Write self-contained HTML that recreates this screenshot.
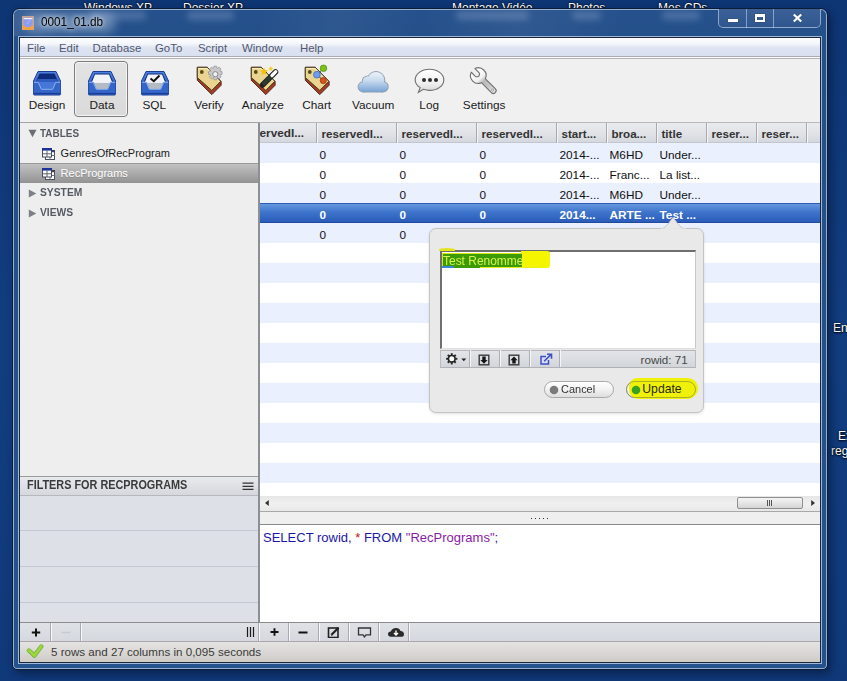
<!DOCTYPE html>
<html><head><meta charset="utf-8">
<style>
*{margin:0;padding:0;box-sizing:border-box}
html,body{width:847px;height:681px;overflow:hidden}
body{position:relative;background:#133c7c;font-family:"Liberation Sans",sans-serif;font-size:12px;color:#000}
.a{position:absolute;display:block}
.t{position:absolute;white-space:nowrap}
.dt{position:absolute;color:#fff;font-size:12px;line-height:14px;text-shadow:0 1px 2px #000,0 0 2px #000;white-space:nowrap}
</style></head><body>

<div class="a" style="left:0px;top:0px;width:847px;height:681px;background:linear-gradient(180deg,#0e3574 0%,#123d7f 50%,#10397a 100%)"></div>
<div class="dt" style="left:84px;top:1px">Windows XP</div>
<div class="dt" style="left:183px;top:1px">Dossier XP</div>
<div class="dt" style="left:452px;top:1px">Montage Vidéo</div>
<div class="dt" style="left:568px;top:1px">Photos</div>
<div class="dt" style="left:658px;top:1px">Mes CDs</div>
<div class="dt" style="left:833px;top:321px">Ent</div>
<div class="dt" style="left:838px;top:429px">Ex</div>
<div class="dt" style="left:831px;top:443.5px">reg</div>
<div class="a" style="left:12px;top:8px;width:816px;height:662px;border-radius:7px 7px 5px 5px;background:linear-gradient(180deg,#26518c 0px,#24508a 28px,#25518c 100%);border:1px solid #0e1c33;box-shadow:inset 0 0 0 1px #93b1d6,3px 4px 8px rgba(0,10,30,.45)"></div>
<div class="a" style="left:88px;top:11px;width:58px;height:9px;background:rgba(210,225,250,.22);filter:blur(3px);border-radius:4px"></div>
<div class="a" style="left:187px;top:11px;width:47px;height:9px;background:rgba(210,225,250,.22);filter:blur(3px);border-radius:4px"></div>
<div class="a" style="left:456px;top:11px;width:73px;height:9px;background:rgba(210,225,250,.22);filter:blur(3px);border-radius:4px"></div>
<div class="a" style="left:572px;top:11px;width:29px;height:9px;background:rgba(210,225,250,.22);filter:blur(3px);border-radius:4px"></div>
<div class="a" style="left:662px;top:11px;width:38px;height:9px;background:rgba(210,225,250,.22);filter:blur(3px);border-radius:4px"></div>
<div class="a" style="left:14px;top:10px;width:812px;height:26px;border-radius:6px 6px 0 0;background:linear-gradient(100deg,rgba(255,255,255,.10) 0%,rgba(255,255,255,0) 6%,rgba(255,255,255,0) 30%,rgba(255,255,255,.04) 40%,rgba(255,255,255,0) 50%,rgba(255,255,255,.05) 62%,rgba(255,255,255,0) 75%)"></div>
<div class="a" style="left:18px;top:36px;width:804px;height:628px;border:1px solid #9cb8de"></div>
<div class="a" style="left:24px;top:13px;width:92px;height:20px;background:rgba(230,240,255,.32);border-radius:10px;filter:blur(5px)"></div>
<svg class="a" style="left:21px;top:15px;" width="14" height="16" viewBox="0 0 14 16"><rect x="1" y="1" width="12" height="14" fill="#c9a58a"/><rect x="2.5" y="2.5" width="9" height="9.5" fill="#8d9cf2"/><rect x="2.5" y="3" width="9" height="1.2" fill="#f0f2ff"/><path d="M1 10.5h2.6l1.2 1.8h4.4l1.2-1.8H13V15H1z" fill="#eea24a"/><path d="M6 9l3-4" stroke="#b0b8ff" stroke-width="1"/></svg>
<div class="t" style="left:41px;top:15.48px;font-size:12.5px;line-height:14.37px;color:#000;transform:scaleX(.94);transform-origin:0 0;text-shadow:0 0 8px rgba(255,255,255,.9),0 0 4px rgba(255,255,255,.7)">0001_01.db</div>
<div class="a" style="left:718px;top:9px;width:103px;height:19px;border:1px solid rgba(200,218,244,.6);border-top:none;border-radius:0 0 5px 5px;background:linear-gradient(180deg,#3c6198,#2f568e)"></div>
<div class="a" style="left:746px;top:9px;width:1px;height:19px;background:rgba(215,228,248,.5)"></div>
<div class="a" style="left:773px;top:9px;width:1px;height:19px;background:rgba(215,228,248,.5)"></div>
<div class="a" style="left:728px;top:19px;width:10px;height:3px;background:#fff;box-shadow:0 0 1px #223"></div>
<div class="a" style="left:755px;top:14px;width:10px;height:8px;border:2px solid #fff;border-top-width:3px;box-shadow:0 0 1px #223"></div>
<svg class="a" style="left:792px;top:13px;" width="11" height="10" viewBox="0 0 11 10"><path d="M1.8 1.5L9.2 8.5M9.2 1.5L1.8 8.5" stroke="#fff" stroke-width="2.2"/></svg>
<div class="a" style="left:19px;top:37px;width:802px;height:626px;background:#f0f0f0;border:1px solid #1a2535;box-shadow:inset 1px 1px 0 #f8fbfb"></div>
<div class="a" style="left:20px;top:38px;width:800px;height:18px;background:linear-gradient(180deg,#fdfdfe 0%,#f5f7fb 30%,#dde3f1 55%,#d9e0f0 100%)"></div>
<div class="a" style="left:20px;top:56px;width:800px;height:1px;background:#a9abb2"></div>
<div class="a" style="left:20px;top:57px;width:800px;height:1px;background:#fbfbfc"></div>
<div class="a" style="left:20px;top:58px;width:800px;height:1px;background:#b4b4b6"></div>
<div class="t" style="left:27px;top:41.69px;font-size:11.4px;line-height:13.11px;color:#525870;">File</div>
<div class="t" style="left:59px;top:41.69px;font-size:11.4px;line-height:13.11px;color:#525870;">Edit</div>
<div class="t" style="left:92.5px;top:41.69px;font-size:11.4px;line-height:13.11px;color:#525870;">Database</div>
<div class="t" style="left:155px;top:41.69px;font-size:11.4px;line-height:13.11px;color:#525870;">GoTo</div>
<div class="t" style="left:198px;top:41.69px;font-size:11.4px;line-height:13.11px;color:#525870;">Script</div>
<div class="t" style="left:242px;top:41.69px;font-size:11.4px;line-height:13.11px;color:#525870;">Window</div>
<div class="t" style="left:300px;top:41.69px;font-size:11.4px;line-height:13.11px;color:#525870;">Help</div>
<div class="a" style="left:20px;top:59px;width:800px;height:63px;background:#f0f0f0"></div>
<div class="a" style="left:20px;top:122px;width:800px;height:1px;background:#a4a4a4"></div>
<div class="a" style="left:74px;top:61px;width:54px;height:56px;border:1px solid #7d7d7d;border-radius:4px;background:linear-gradient(180deg,#e3e3e3,#dadada);box-shadow:inset 0 0 0 1px #f4f4f4"></div>
<svg class="a" style="left:33px;top:71px;" width="28" height="25" viewBox="0 0 28 25"><defs><linearGradient id="tg33" x1="0" y1="0" x2="0" y2="1"><stop offset="0" stop-color="#4f82e0"/><stop offset="1" stop-color="#2350b5"/></linearGradient></defs>
<path d="M5 0.5H23L27.5 10V23Q27.5 24 26.5 24H1.5Q0.5 24 0.5 23V10Z" fill="url(#tg33)" stroke="#1b3c95" stroke-width="1"/>
<path d="M6.5 2.5H21.5L25 10.5H3Z" fill="#0e2a7a"/>
<path d="M4.5 8H23.5L24.5 11H3.5Z" fill="#2f5cc0"/><path d="M5 11H23L20 18.5H8Z" fill="#4677d6"/>
<path d="M0.5 11H5.5L8.5 18H19.5L22.5 11H27.5V23.5H0.5Z" fill="#3465c8"/>
<path d="M0.8 11.3H5.3L8.3 18.3H19.7L22.7 11.3H27.2" fill="none" stroke="#8db0f0" stroke-width="1"/>
<path d="M1 22.5H27" stroke="#1b3c95" stroke-width="1.2"/></svg>
<svg class="a" style="left:88px;top:71px;" width="28" height="25" viewBox="0 0 28 25"><defs><linearGradient id="tg88" x1="0" y1="0" x2="0" y2="1"><stop offset="0" stop-color="#4f82e0"/><stop offset="1" stop-color="#2350b5"/></linearGradient></defs>
<path d="M5 0.5H23L27.5 10V23Q27.5 24 26.5 24H1.5Q0.5 24 0.5 23V10Z" fill="url(#tg88)" stroke="#1b3c95" stroke-width="1"/>
<path d="M6.5 2.5H21.5L25 10.5H3Z" fill="#0e2a7a"/>
<path d="M7 3.5H21L24 11H4Z" fill="#f2f3f8"/><path d="M4.5 11H23.5L20.5 18.5H7.5Z" fill="#eceef3"/><path d="M5.5 13H22.5M6.5 15H21.5M7.5 17H20.5" stroke="#7f8896" stroke-width="1.1"/>
<path d="M0.5 11H5.5L8.5 18H19.5L22.5 11H27.5V23.5H0.5Z" fill="#3465c8"/>
<path d="M0.8 11.3H5.3L8.3 18.3H19.7L22.7 11.3H27.2" fill="none" stroke="#8db0f0" stroke-width="1"/>
<path d="M1 22.5H27" stroke="#1b3c95" stroke-width="1.2"/></svg>
<svg class="a" style="left:141px;top:71px;" width="28" height="25" viewBox="0 0 28 25"><defs><linearGradient id="tg141" x1="0" y1="0" x2="0" y2="1"><stop offset="0" stop-color="#4f82e0"/><stop offset="1" stop-color="#2350b5"/></linearGradient></defs>
<path d="M5 0.5H23L27.5 10V23Q27.5 24 26.5 24H1.5Q0.5 24 0.5 23V10Z" fill="url(#tg141)" stroke="#1b3c95" stroke-width="1"/>
<path d="M6.5 2.5H21.5L25 10.5H3Z" fill="#0e2a7a"/>
<path d="M7 3.5H21L24 11H4Z" fill="#f2f3f8"/><path d="M4.5 11H23.5L20.5 18.5H7.5Z" fill="#eceef3"/><path d="M5.5 13H22.5M6.5 15H21.5M7.5 17H20.5" stroke="#7f8896" stroke-width="1.1"/><path d="M9.5 7.5L12.8 10.2L18.5 4.5" fill="none" stroke="#111" stroke-width="2"/>
<path d="M0.5 11H5.5L8.5 18H19.5L22.5 11H27.5V23.5H0.5Z" fill="#3465c8"/>
<path d="M0.8 11.3H5.3L8.3 18.3H19.7L22.7 11.3H27.2" fill="none" stroke="#8db0f0" stroke-width="1"/>
<path d="M1 22.5H27" stroke="#1b3c95" stroke-width="1.2"/></svg>
<svg class="a" style="left:192px;top:62px;" width="40" height="36" viewBox="0 0 40 36"><path d="M5.3 5.3H15.3L29.1 19.6V23.3L19.8 32.6L5.3 18.3Z" fill="#a33a22" stroke="#4a2a1a" stroke-width="1"/>
<path d="M5.3 5.3H15.3L28.8 19.3L19.8 28.4L5.3 15.6Z" fill="#e9d58f" stroke="#4a3a22" stroke-width="1"/>
<path d="M6.5 6.5H14.8L27 19.3" fill="none" stroke="#f8eec0" stroke-width="1"/>
<circle cx="9.8" cy="10" r="1.9" fill="#5a4a18"/>
<g transform="translate(23.3 12.2)"><path d="M-1.3-8h2.6l.6 2.2 2-1.2 1.9 1.9-1.2 2 2.2.6v2.6l-2.2.6 1.2 2-1.9 1.9-2-1.2-.6 2.2h-2.6l-.6-2.2-2 1.2-1.9-1.9 1.2-2-2.2-.6v-2.6l2.2-.6-1.2-2 1.9-1.9 2 1.2z" fill="#c9c9cc" stroke="#8f8f95" stroke-width=".7"/><circle r="2.6" fill="#f0f0f2" stroke="#888" stroke-width="1"/></g></svg>
<svg class="a" style="left:246px;top:62px;" width="40" height="36" viewBox="0 0 40 36"><path d="M5.3 5.3H15.3L29.1 19.6V23.3L19.8 32.6L5.3 18.3Z" fill="#a33a22" stroke="#4a2a1a" stroke-width="1"/>
<path d="M5.3 5.3H15.3L28.8 19.3L19.8 28.4L5.3 15.6Z" fill="#e9d58f" stroke="#4a3a22" stroke-width="1"/>
<path d="M6.5 6.5H14.8L27 19.3" fill="none" stroke="#f8eec0" stroke-width="1"/>
<circle cx="9.8" cy="10" r="1.9" fill="#5a4a18"/>
<path d="M18 5.5l1.2 2.6 2.8.2-2.1 1.9.7 2.8-2.6-1.5-2.4 1.6.6-2.8-2.2-1.8 2.8-.3z" fill="#f2c200"/><path d="M24.8 4l.9 1.7 1.8.3-1.4 1.2.4 1.8-1.7-.9-1.6 1 .3-1.8-1.3-1.3 1.8-.2z" fill="#f4d020"/>
<path d="M16.5 23L29.5 10" stroke="#222" stroke-width="5.5" stroke-linecap="round"/><path d="M17 22.5L28.5 11" stroke="#2e3a2e" stroke-width="3.5"/><path d="M26 13.5L29.8 9.7" stroke="#fff" stroke-width="3.2" stroke-linecap="round"/></svg>
<svg class="a" style="left:300px;top:62px;" width="40" height="36" viewBox="0 0 40 36"><path d="M5.3 5.3H15.3L29.1 19.6V23.3L19.8 32.6L5.3 18.3Z" fill="#a33a22" stroke="#4a2a1a" stroke-width="1"/>
<path d="M5.3 5.3H15.3L28.8 19.3L19.8 28.4L5.3 15.6Z" fill="#e9d58f" stroke="#4a3a22" stroke-width="1"/>
<path d="M6.5 6.5H14.8L27 19.3" fill="none" stroke="#f8eec0" stroke-width="1"/>
<circle cx="9.8" cy="10" r="1.9" fill="#5a4a18"/>
<path d="M17 12.7L23.5 6.3M17 12.7L23.3 18.5" stroke="#3b5a3a" stroke-width="1"/><circle cx="23.5" cy="6.3" r="3.3" fill="#7ac11a" stroke="#4e8a10" stroke-width=".7"/><circle cx="16.9" cy="12.7" r="3.4" fill="#6e9cf0" stroke="#3d63b5" stroke-width=".7"/><circle cx="23.3" cy="18.6" r="3.1" fill="#d9531f" stroke="#8f3010" stroke-width=".7"/></svg>
<svg class="a" style="left:352px;top:62px;" width="46" height="36" viewBox="0 0 46 36"><defs><linearGradient id="cg" gradientUnits="userSpaceOnUse" x1="0" y1="9" x2="0" y2="30"><stop offset="0" stop-color="#f2f6fb"/><stop offset=".45" stop-color="#c9dbef"/><stop offset="1" stop-color="#78a3d6"/></linearGradient></defs>
<g fill="#8c9db0"><circle cx="11.2" cy="24.9" r="5.6"/><circle cx="15.8" cy="19.5" r="6.1"/><circle cx="24" cy="18.2" r="9.2"/><circle cx="31" cy="24.8" r="5.7"/><rect x="11" y="20" width="20" height="10.5"/></g>
<g fill="url(#cg)"><circle cx="11.2" cy="24.9" r="4.7"/><circle cx="15.8" cy="19.5" r="5.2"/><circle cx="24" cy="18.2" r="8.3"/><circle cx="31" cy="24.8" r="4.8"/><rect x="11" y="20" width="20" height="9.6"/></g></svg>
<svg class="a" style="left:408px;top:62px;" width="46" height="36" viewBox="0 0 46 36"><defs><linearGradient id="lg" x1="0" y1="0" x2="0" y2="1"><stop offset="0" stop-color="#ffffff"/><stop offset=".6" stop-color="#f0f0f0"/><stop offset="1" stop-color="#d4d4d4"/></linearGradient></defs>
<path d="M21.5 7.3C29.5 7.3 35.8 12 35.8 17.9C35.8 23.8 29.5 28.4 21.5 28.4C19.2 28.4 17.2 28 15.3 27.3L10.3 30.5L12.2 25.6C9 23.6 7.2 21 7.2 17.9C7.2 12 13.5 7.3 21.5 7.3Z" fill="url(#lg)" stroke="#6f6f6f" stroke-width="1.1"/>
<circle cx="16" cy="17.9" r="2" fill="#2e2e2e"/><circle cx="22" cy="17.9" r="2" fill="#2e2e2e"/><circle cx="28" cy="17.9" r="2" fill="#2e2e2e"/></svg>
<svg class="a" style="left:462px;top:62px;" width="46" height="36" viewBox="0 0 46 36"><defs><linearGradient id="wg" gradientUnits="userSpaceOnUse" x1="12" y1="8" x2="32" y2="30"><stop offset="0" stop-color="#ffffff"/><stop offset=".35" stop-color="#f2f2f2"/><stop offset=".5" stop-color="#b8b8b8"/><stop offset=".75" stop-color="#c8c8c8"/><stop offset="1" stop-color="#e0e0e0"/></linearGradient></defs>
<path d="M12.94 6.56L16.73 10.35A2.6 2.6 0 0 1 13.05 14.03L9.26 10.24A7.8 7.8 0 0 0 19.47 20.73L29.32 30.58A2.8 2.8 0 0 0 33.28 26.62L23.43 16.77A7.8 7.8 0 0 0 12.94 6.56Z" fill="url(#wg)" stroke="#707070" stroke-width="1.1" stroke-linejoin="round"/>
<circle cx="30.6" cy="27.9" r="1" fill="#fff" stroke="#777" stroke-width=".6"/></svg>
<div class="t" style="left:7px;width:80px;text-align:center;top:98.90px;font-size:11.8px;line-height:13px;color:#1a1a1a">Design</div>
<div class="t" style="left:62px;width:80px;text-align:center;top:98.90px;font-size:11.8px;line-height:13px;color:#1a1a1a">Data</div>
<div class="t" style="left:114.30000000000001px;width:80px;text-align:center;top:98.90px;font-size:11.8px;line-height:13px;color:#1a1a1a">SQL</div>
<div class="t" style="left:169px;width:80px;text-align:center;top:98.90px;font-size:11.8px;line-height:13px;color:#1a1a1a">Verify</div>
<div class="t" style="left:222.8px;width:80px;text-align:center;top:98.90px;font-size:11.8px;line-height:13px;color:#1a1a1a">Analyze</div>
<div class="t" style="left:276.7px;width:80px;text-align:center;top:98.90px;font-size:11.8px;line-height:13px;color:#1a1a1a">Chart</div>
<div class="t" style="left:333.2px;width:80px;text-align:center;top:98.90px;font-size:11.8px;line-height:13px;color:#1a1a1a">Vacuum</div>
<div class="t" style="left:389.2px;width:80px;text-align:center;top:98.90px;font-size:11.8px;line-height:13px;color:#1a1a1a">Log</div>
<div class="t" style="left:444.2px;width:80px;text-align:center;top:98.90px;font-size:11.8px;line-height:13px;color:#1a1a1a">Settings</div>
<div class="a" style="left:20px;top:123px;width:238px;height:353px;background:#eeeeee"></div>
<div class="a" style="left:258px;top:123px;width:2px;height:500px;background:#8c9094"></div>
<svg class="a" style="left:28px;top:129px;" width="9" height="9" viewBox="0 0 9 9"><path d="M0.5 0.8H8.5L4.5 8.3Z" fill="#6a6e76"/></svg>
<div class="t" style="left:40.3px;top:126.68px;font-size:11.2px;line-height:12.88px;color:#555a64;font-weight:bold;transform:scaleX(.89);transform-origin:0 0">TABLES</div>
<svg class="a" style="left:42px;top:148px;" width="13" height="12" viewBox="0 0 13 12"><rect x="3.5" y="2.5" width="9" height="9" fill="#fff" stroke="#4b5060" stroke-width="1"/><rect x="3" y="2" width="10" height="2.2" fill="#3a4360"/><path d="M8 4V11.5M3.5 7.5H12.5" stroke="#6a6f7c" stroke-width="1"/>
<rect x="0.5" y="0.5" width="9" height="8.5" fill="#fff" stroke="#464b5a" stroke-width="1"/><rect x="0" y="0" width="10" height="2.6" fill="#1c3494"/><path d="M5 2.6V9M0.5 5.8H9.5" stroke="#5c6270" stroke-width="1"/></svg>
<div class="t" style="left:60.6px;top:146.56px;font-size:11px;line-height:12.65px;color:#1c1c1c;">GenresOfRecProgram</div>
<div class="a" style="left:20px;top:163px;width:238px;height:20px;background:linear-gradient(180deg,#c2c2c2 0%,#aaaaaa 50%,#929292 100%);border-top:1px solid #9a9a9a"></div>
<svg class="a" style="left:42px;top:168px;" width="13" height="12" viewBox="0 0 13 12"><rect x="3.5" y="2.5" width="9" height="9" fill="#fff" stroke="#4b5060" stroke-width="1"/><rect x="3" y="2" width="10" height="2.2" fill="#3a4360"/><path d="M8 4V11.5M3.5 7.5H12.5" stroke="#6a6f7c" stroke-width="1"/>
<rect x="0.5" y="0.5" width="9" height="8.5" fill="#fff" stroke="#464b5a" stroke-width="1"/><rect x="0" y="0" width="10" height="2.6" fill="#1c3494"/><path d="M5 2.6V9M0.5 5.8H9.5" stroke="#5c6270" stroke-width="1"/></svg>
<div class="t" style="left:60.6px;top:166.56px;font-size:11px;line-height:12.65px;color:#fff;text-shadow:0 1px 0 rgba(0,0,0,.18)">RecPrograms</div>
<svg class="a" style="left:28px;top:189px;" width="9" height="9" viewBox="0 0 9 9"><path d="M0.8 0.5V8.5L8.3 4.5Z" fill="#7c8088"/></svg>
<div class="t" style="left:40.3px;top:186.38px;font-size:11.2px;line-height:12.88px;color:#555a64;font-weight:bold;transform:scaleX(.92);transform-origin:0 0">SYSTEM</div>
<svg class="a" style="left:28px;top:209px;" width="9" height="9" viewBox="0 0 9 9"><path d="M0.8 0.5V8.5L8.3 4.5Z" fill="#7c8088"/></svg>
<div class="t" style="left:40.3px;top:205.98px;font-size:11.2px;line-height:12.88px;color:#555a64;font-weight:bold;transform:scaleX(.92);transform-origin:0 0">VIEWS</div>
<div class="a" style="left:20px;top:476px;width:238px;height:1px;background:#9a9a9a"></div>
<div class="a" style="left:20px;top:477px;width:238px;height:19px;background:linear-gradient(180deg,#e9eaec 0%,#dee0e4 50%,#d4d7dd 100%)"></div>
<div class="a" style="left:20px;top:495px;width:238px;height:1px;background:#b8b8bc"></div>
<div class="t" style="left:27px;top:478.64px;font-size:12px;line-height:13.80px;color:#3a3a3a;font-weight:bold;transform:scaleX(.905);transform-origin:0 0">FILTERS FOR RECPROGRAMS</div>
<svg class="a" style="left:242px;top:482px;" width="12" height="9" viewBox="0 0 12 9"><path d="M0.5 1.2H11.5M0.5 4.3H11.5M0.5 7.4H11.5" stroke="#333" stroke-width="1.3"/></svg>
<div class="a" style="left:20px;top:496px;width:238px;height:126px;background:#dde0e6"></div>
<div class="a" style="left:20px;top:530px;width:238px;height:1px;background:#c4c7cf"></div>
<div class="a" style="left:20px;top:566px;width:238px;height:1px;background:#c4c7cf"></div>
<div class="a" style="left:20px;top:602px;width:238px;height:1px;background:#c4c7cf"></div>
<div class="a" style="left:260px;top:122px;width:560px;height:1px;background:#b9b9b9"></div>
<div class="a" style="left:260px;top:123px;width:560px;height:20px;background:linear-gradient(180deg,#eaebee 0%,#dfe1e6 60%,#d3d6dc 100%)"></div>
<div class="a" style="left:260px;top:142px;width:560px;height:1px;background:#c3c6cc"></div>
<div class="a" style="left:316px;top:123px;width:1px;height:20px;background:#a6a8ad"></div>
<div class="a" style="left:317px;top:123px;width:1px;height:20px;background:#f4f5f7"></div>
<div class="a" style="left:396px;top:123px;width:1px;height:20px;background:#a6a8ad"></div>
<div class="a" style="left:397px;top:123px;width:1px;height:20px;background:#f4f5f7"></div>
<div class="a" style="left:476px;top:123px;width:1px;height:20px;background:#a6a8ad"></div>
<div class="a" style="left:477px;top:123px;width:1px;height:20px;background:#f4f5f7"></div>
<div class="a" style="left:556px;top:123px;width:1px;height:20px;background:#a6a8ad"></div>
<div class="a" style="left:557px;top:123px;width:1px;height:20px;background:#f4f5f7"></div>
<div class="a" style="left:606px;top:123px;width:1px;height:20px;background:#a6a8ad"></div>
<div class="a" style="left:607px;top:123px;width:1px;height:20px;background:#f4f5f7"></div>
<div class="a" style="left:656px;top:123px;width:1px;height:20px;background:#a6a8ad"></div>
<div class="a" style="left:657px;top:123px;width:1px;height:20px;background:#f4f5f7"></div>
<div class="a" style="left:706px;top:123px;width:1px;height:20px;background:#a6a8ad"></div>
<div class="a" style="left:707px;top:123px;width:1px;height:20px;background:#f4f5f7"></div>
<div class="a" style="left:756px;top:123px;width:1px;height:20px;background:#a6a8ad"></div>
<div class="a" style="left:757px;top:123px;width:1px;height:20px;background:#f4f5f7"></div>
<div class="a" style="left:806px;top:123px;width:1px;height:20px;background:#a6a8ad"></div>
<div class="a" style="left:807px;top:123px;width:1px;height:20px;background:#f4f5f7"></div>
<div class="a" style="left:260px;top:123px;width:56px;height:19px;overflow:hidden">
<div class="t" style="left:-0.5px;top:3.63px;font-size:11.8px;line-height:13.57px;color:#333;font-weight:bold;">ervedI...</div>
</div>
<div class="t" style="left:321.5px;top:126.81px;font-size:11.6px;line-height:13.34px;color:#333;font-weight:bold;">reservedI...</div>
<div class="t" style="left:401.5px;top:126.81px;font-size:11.6px;line-height:13.34px;color:#333;font-weight:bold;">reservedI...</div>
<div class="t" style="left:481.5px;top:126.81px;font-size:11.6px;line-height:13.34px;color:#333;font-weight:bold;">reservedI...</div>
<div class="t" style="left:561.5px;top:126.81px;font-size:11.6px;line-height:13.34px;color:#333;font-weight:bold;">start...</div>
<div class="t" style="left:611.5px;top:126.81px;font-size:11.6px;line-height:13.34px;color:#333;font-weight:bold;">broa...</div>
<div class="t" style="left:661.5px;top:126.81px;font-size:11.6px;line-height:13.34px;color:#333;font-weight:bold;">title</div>
<div class="t" style="left:711.5px;top:126.81px;font-size:11.6px;line-height:13.34px;color:#333;font-weight:bold;">reser...</div>
<div class="t" style="left:761.5px;top:126.81px;font-size:11.6px;line-height:13.34px;color:#333;font-weight:bold;">reser...</div>
<div class="a" style="left:260px;top:143px;width:560px;height:20px;background:#eaf0fd"></div>
<div class="a" style="left:260px;top:163px;width:560px;height:20px;background:#ffffff"></div>
<div class="a" style="left:260px;top:183px;width:560px;height:20px;background:#eaf0fd"></div>
<div class="a" style="left:260px;top:223px;width:560px;height:20px;background:#eaf0fd"></div>
<div class="a" style="left:260px;top:243px;width:560px;height:20px;background:#ffffff"></div>
<div class="a" style="left:260px;top:263px;width:560px;height:20px;background:#eaf0fd"></div>
<div class="a" style="left:260px;top:283px;width:560px;height:20px;background:#ffffff"></div>
<div class="a" style="left:260px;top:303px;width:560px;height:20px;background:#eaf0fd"></div>
<div class="a" style="left:260px;top:323px;width:560px;height:20px;background:#ffffff"></div>
<div class="a" style="left:260px;top:343px;width:560px;height:20px;background:#eaf0fd"></div>
<div class="a" style="left:260px;top:363px;width:560px;height:20px;background:#ffffff"></div>
<div class="a" style="left:260px;top:383px;width:560px;height:20px;background:#eaf0fd"></div>
<div class="a" style="left:260px;top:403px;width:560px;height:20px;background:#ffffff"></div>
<div class="a" style="left:260px;top:423px;width:560px;height:20px;background:#eaf0fd"></div>
<div class="a" style="left:260px;top:443px;width:560px;height:20px;background:#ffffff"></div>
<div class="a" style="left:260px;top:463px;width:560px;height:20px;background:#eaf0fd"></div>
<div class="a" style="left:260px;top:483px;width:560px;height:13px;background:#ffffff"></div>
<div class="a" style="left:260px;top:203px;width:560px;height:20px;background:linear-gradient(180deg,#6497dc 0%,#3f74cc 45%,#2a5cb9 100%);border-top:1px solid #2f5fb5;border-bottom:1px solid #1f4aa0"></div>
<div class="t" style="left:319.5px;top:148.73px;font-size:11.8px;line-height:13.57px;color:#111;">0</div>
<div class="t" style="left:399.5px;top:148.73px;font-size:11.8px;line-height:13.57px;color:#111;">0</div>
<div class="t" style="left:479.5px;top:148.73px;font-size:11.8px;line-height:13.57px;color:#111;">0</div>
<div class="t" style="left:559.5px;top:148.73px;font-size:11.8px;line-height:13.57px;color:#111;">2014-...</div>
<div class="t" style="left:609.5px;top:148.73px;font-size:11.8px;line-height:13.57px;color:#111;">M6HD</div>
<div class="t" style="left:659.5px;top:148.73px;font-size:11.8px;line-height:13.57px;color:#111;">Under...</div>
<div class="t" style="left:319.5px;top:168.73px;font-size:11.8px;line-height:13.57px;color:#111;">0</div>
<div class="t" style="left:399.5px;top:168.73px;font-size:11.8px;line-height:13.57px;color:#111;">0</div>
<div class="t" style="left:479.5px;top:168.73px;font-size:11.8px;line-height:13.57px;color:#111;">0</div>
<div class="t" style="left:559.5px;top:168.73px;font-size:11.8px;line-height:13.57px;color:#111;">2014-...</div>
<div class="t" style="left:609.5px;top:168.73px;font-size:11.8px;line-height:13.57px;color:#111;">Franc...</div>
<div class="t" style="left:659.5px;top:168.73px;font-size:11.8px;line-height:13.57px;color:#111;">La list...</div>
<div class="t" style="left:319.5px;top:188.73px;font-size:11.8px;line-height:13.57px;color:#111;">0</div>
<div class="t" style="left:399.5px;top:188.73px;font-size:11.8px;line-height:13.57px;color:#111;">0</div>
<div class="t" style="left:479.5px;top:188.73px;font-size:11.8px;line-height:13.57px;color:#111;">0</div>
<div class="t" style="left:559.5px;top:188.73px;font-size:11.8px;line-height:13.57px;color:#111;">2014-...</div>
<div class="t" style="left:609.5px;top:188.73px;font-size:11.8px;line-height:13.57px;color:#111;">M6HD</div>
<div class="t" style="left:659.5px;top:188.73px;font-size:11.8px;line-height:13.57px;color:#111;">Under...</div>
<div class="t" style="left:319.5px;top:208.73px;font-size:11.8px;line-height:13.57px;color:#fff;font-weight:bold;">0</div>
<div class="t" style="left:399.5px;top:208.73px;font-size:11.8px;line-height:13.57px;color:#fff;font-weight:bold;">0</div>
<div class="t" style="left:479.5px;top:208.73px;font-size:11.8px;line-height:13.57px;color:#fff;font-weight:bold;">0</div>
<div class="t" style="left:559.5px;top:208.73px;font-size:11.8px;line-height:13.57px;color:#fff;font-weight:bold;">2014...</div>
<div class="t" style="left:609.5px;top:208.73px;font-size:11.8px;line-height:13.57px;color:#fff;font-weight:bold;">ARTE ...</div>
<div class="t" style="left:659.5px;top:208.73px;font-size:11.8px;line-height:13.57px;color:#fff;font-weight:bold;">Test ...</div>
<div class="t" style="left:319.5px;top:228.73px;font-size:11.8px;line-height:13.57px;color:#111;">0</div>
<div class="t" style="left:399.5px;top:228.73px;font-size:11.8px;line-height:13.57px;color:#111;">0</div>
<div class="a" style="left:260px;top:496px;width:560px;height:15px;background:linear-gradient(180deg,#e6e6e6,#f0f0f0 50%,#e8e8e8)"></div>
<svg class="a" style="left:264px;top:499px;" width="6" height="8" viewBox="0 0 6 8"><path d="M4.8 1V7L1 4Z" fill="#333"/></svg>
<svg class="a" style="left:810px;top:499px;" width="6" height="8" viewBox="0 0 6 8"><path d="M1.2 1V7L5 4Z" fill="#333"/></svg>
<div class="a" style="left:737px;top:497px;width:66px;height:12px;border:1px solid #8e8f8f;border-radius:2px;background:linear-gradient(180deg,#f4f4f4 0%,#e6e6e6 50%,#d4d4d4 100%)"></div>
<div class="a" style="left:767px;top:500px;width:1px;height:6px;background:#555"></div>
<div class="a" style="left:769px;top:500px;width:1px;height:6px;background:#555"></div>
<div class="a" style="left:771px;top:500px;width:1px;height:6px;background:#555"></div>
<div class="a" style="left:260px;top:511px;width:560px;height:1px;background:#a8a8a8"></div>
<div class="a" style="left:260px;top:512px;width:560px;height:12px;background:#efefef"></div>
<svg class="a" style="left:530px;top:517px;" width="20" height="3" viewBox="0 0 20 3"><path d="M1 1.5h1M5 1.5h1M9 1.5h1M13 1.5h1M17 1.5h1" stroke="#333" stroke-width="1"/></svg>
<div class="a" style="left:260px;top:524px;width:560px;height:1px;background:#8a8a8a"></div>
<div class="a" style="left:260px;top:525px;width:560px;height:97px;background:#fff"></div>
<div class="t" style="left:263px;top:530px;font-size:13px;line-height:15px;color:#1c18a8">SELECT rowid, <span style="color:#c01818">*</span> FROM <span style="color:#8a1aa6">"RecPrograms"</span>;</div>
<div class="a" style="left:20px;top:622px;width:800px;height:1px;background:#8c8c8c"></div>
<div class="a" style="left:20px;top:623px;width:800px;height:18px;background:linear-gradient(180deg,#dee1e6 0%,#d5d8de 100%)"></div>
<div class="a" style="left:20px;top:641px;width:800px;height:1px;background:#aba6ab"></div>
<div class="a" style="left:50px;top:623px;width:1px;height:18px;background:#a9abb0"></div>
<div class="a" style="left:51px;top:623px;width:1px;height:18px;background:#f7f8fa"></div>
<div class="a" style="left:80px;top:623px;width:1px;height:18px;background:#a9abb0"></div>
<div class="a" style="left:81px;top:623px;width:1px;height:18px;background:#f7f8fa"></div>
<div class="a" style="left:258px;top:623px;width:1px;height:18px;background:#a9abb0"></div>
<div class="a" style="left:259px;top:623px;width:1px;height:18px;background:#f7f8fa"></div>
<div class="a" style="left:288px;top:623px;width:1px;height:18px;background:#a9abb0"></div>
<div class="a" style="left:289px;top:623px;width:1px;height:18px;background:#f7f8fa"></div>
<div class="a" style="left:318px;top:623px;width:1px;height:18px;background:#a9abb0"></div>
<div class="a" style="left:319px;top:623px;width:1px;height:18px;background:#f7f8fa"></div>
<div class="a" style="left:348px;top:623px;width:1px;height:18px;background:#a9abb0"></div>
<div class="a" style="left:349px;top:623px;width:1px;height:18px;background:#f7f8fa"></div>
<div class="a" style="left:378px;top:623px;width:1px;height:18px;background:#a9abb0"></div>
<div class="a" style="left:379px;top:623px;width:1px;height:18px;background:#f7f8fa"></div>
<div class="a" style="left:408px;top:623px;width:1px;height:18px;background:#a9abb0"></div>
<div class="a" style="left:409px;top:623px;width:1px;height:18px;background:#f7f8fa"></div>
<svg class="a" style="left:31px;top:628px;" width="10" height="9" viewBox="0 0 10 9"><path d="M5 0.5V8.5M0.8 4.5H9.2" stroke="#111" stroke-width="2"/></svg>
<svg class="a" style="left:61px;top:631px;" width="10" height="3" viewBox="0 0 10 3"><path d="M0.5 1.5H9.5" stroke="#c8cacd" stroke-width="1.5"/></svg>
<svg class="a" style="left:246px;top:627px;" width="9" height="10" viewBox="0 0 9 10"><path d="M1.5 0V10M4.5 0V10M7.5 0V10" stroke="#1a1a1a" stroke-width="1.2"/></svg>
<svg class="a" style="left:269.5px;top:628px;" width="9" height="9" viewBox="0 0 9 9"><path d="M4.5 0.3V7.8M0.5 4H8.5" stroke="#111" stroke-width="1.9"/></svg>
<svg class="a" style="left:298px;top:630px;" width="10" height="5" viewBox="0 0 10 5"><path d="M0.5 2.5H9.5" stroke="#111" stroke-width="2"/></svg>
<svg class="a" style="left:327px;top:626px;" width="13" height="12" viewBox="0 0 13 12"><rect x="1.5" y="2" width="9.5" height="9.5" fill="none" stroke="#222" stroke-width="1.6"/><path d="M4 9.3L11.5 1.8" stroke="#222" stroke-width="2.3"/><path d="M3.3 10L4 8" stroke="#fff" stroke-width=".6"/></svg>
<svg class="a" style="left:357px;top:626px;" width="15" height="12" viewBox="0 0 15 12"><path d="M1.5 2H13.5V8.8H9L7.5 10.8L6 8.8H1.5Z" fill="none" stroke="#333" stroke-width="1.3"/></svg>
<svg class="a" style="left:387px;top:627px;" width="18" height="11" viewBox="0 0 18 11"><path d="M4 9.8Q1 9.8 1 7Q1 4.5 3.8 4.5Q5 1 9 1Q12.5 1 13.5 4Q17 4.3 17 7.2Q17 9.8 14 9.8Z" fill="#2a2a2a"/><path d="M9 3.5V7.8M7 6L9 8L11 6" stroke="#fff" stroke-width="1.4" fill="none"/></svg>
<div class="a" style="left:20px;top:642px;width:800px;height:20px;background:linear-gradient(180deg,#e4e3e2 0%,#dad8d5 50%,#cecbc6 100%)"></div>
<svg class="a" style="left:26px;top:643px;" width="18" height="16" viewBox="0 0 18 16"><path d="M3 7.5L8.3 12.6L15.3 3.5" fill="none" stroke="#6aa82a" stroke-width="4.4" stroke-linecap="round" stroke-linejoin="round" opacity=".85"/><path d="M3 7.5L8.3 12.6L15.3 3.5" fill="none" stroke="#9ad83c" stroke-width="2.8" stroke-linecap="round" stroke-linejoin="round"/></svg>
<div class="t" style="left:51px;top:645.01px;font-size:11.6px;line-height:13.34px;color:#3a3a3a;">5 rows and 27 columns in 0,095 seconds</div>
<div class="a" style="left:428.5px;top:228px;width:275px;height:184.5px;background:#e9e9e9;border:1px solid #c4c4c4;border-radius:7px;box-shadow:0 1px 3px rgba(0,0,0,.12)"></div>
<svg class="a" style="left:660px;top:216px;" width="27" height="14" viewBox="0 0 27 14"><path d="M2.5 12.8Q6 10.5 8 8L13 1.6L18 8Q20 10.5 23.5 12.8" fill="#e9e9e9" stroke="#c6c6c6" stroke-width="1"/><rect x="1" y="12.5" width="25" height="2" fill="#e9e9e9"/></svg>
<div class="a" style="left:439.5px;top:250px;width:256px;height:99px;background:#fff;border-top:2px solid #6f6f6f;border-left:2px solid #6f6f6f;border-right:1px solid #c8c8c8;border-bottom:1px solid #e0e0e0"></div>
<div class="a" style="left:439px;top:248px;width:16px;height:3px;background:#e4e41c;border-radius:50% 50% 0 0"></div>
<div class="a" style="left:521px;top:251.4px;width:29px;height:16.8px;background:#f5f500;border-radius:0 3px 3px 0"></div>
<div class="a" style="left:442px;top:252.5px;width:80px;height:15.3px;background:#3c9a06;box-shadow:inset 1px 1px 0 #d8e818"></div>
<div class="a" style="left:442px;top:266px;width:12px;height:2px;background:#3a86d6"></div>
<div class="t" style="left:443px;top:253.79px;font-size:12.6px;line-height:14.49px;color:#d4f44a;transform:scaleX(.95);transform-origin:0 0">Test Renomme</div>
<div class="a" style="left:480px;top:267.3px;width:60px;height:1.2px;background:#e6f020"></div>
<div class="a" style="left:439.5px;top:349.5px;width:256px;height:18.5px;background:linear-gradient(180deg,#e2e4e8 0%,#d9dce1 60%,#d2d5da 100%);border-top:1px solid #b5b7bb;border-bottom:1px solid #b0b2b6;border-left:1px solid #b9bbbf;border-right:1px solid #b9bbbf"></div>
<div class="a" style="left:469px;top:350px;width:1px;height:17px;background:#adafb3"></div>
<div class="a" style="left:470px;top:350px;width:1px;height:17px;background:#f5f6f8"></div>
<div class="a" style="left:499px;top:350px;width:1px;height:17px;background:#adafb3"></div>
<div class="a" style="left:500px;top:350px;width:1px;height:17px;background:#f5f6f8"></div>
<div class="a" style="left:529px;top:350px;width:1px;height:17px;background:#adafb3"></div>
<div class="a" style="left:530px;top:350px;width:1px;height:17px;background:#f5f6f8"></div>
<div class="a" style="left:559px;top:350px;width:1px;height:17px;background:#adafb3"></div>
<div class="a" style="left:560px;top:350px;width:1px;height:17px;background:#f5f6f8"></div>
<svg class="a" style="left:445px;top:352px;" width="14" height="14" viewBox="0 0 14 14"><g transform="translate(6.75 6.8)" fill="#262626"><rect x="-0.95" y="-5.6" width="1.9" height="2.6" transform="rotate(0)"/><rect x="-0.95" y="-5.6" width="1.9" height="2.6" transform="rotate(45)"/><rect x="-0.95" y="-5.6" width="1.9" height="2.6" transform="rotate(90)"/><rect x="-0.95" y="-5.6" width="1.9" height="2.6" transform="rotate(135)"/><rect x="-0.95" y="-5.6" width="1.9" height="2.6" transform="rotate(180)"/><rect x="-0.95" y="-5.6" width="1.9" height="2.6" transform="rotate(225)"/><rect x="-0.95" y="-5.6" width="1.9" height="2.6" transform="rotate(270)"/><rect x="-0.95" y="-5.6" width="1.9" height="2.6" transform="rotate(315)"/><circle r="3.3" fill="#fafafa" stroke="#262626" stroke-width="1.6"/></g></svg>
<svg class="a" style="left:461px;top:357.5px;" width="6" height="4" viewBox="0 0 6 4"><path d="M0.3 0.5H5.3L2.8 3.3Z" fill="#222"/></svg>
<svg class="a" style="left:478px;top:353.5px;" width="12" height="12" viewBox="0 0 12 12"><rect x="1.2" y="1.2" width="9.6" height="9.6" fill="none" stroke="#3a3a3a" stroke-width="1.4"/><path d="M6 9.8L2.4 6H4.3V2.6H7.7V6H9.6Z" fill="#151515"/></svg>
<svg class="a" style="left:508px;top:353.5px;" width="12" height="12" viewBox="0 0 12 12"><rect x="1.2" y="1.2" width="9.6" height="9.6" fill="none" stroke="#3a3a3a" stroke-width="1.4"/><path d="M6 2.4L2.4 6.2H4.3V9.6H7.7V6.2H9.6Z" fill="#151515"/></svg>
<svg class="a" style="left:540px;top:353px;" width="13" height="12" viewBox="0 0 13 12"><rect x="1" y="4" width="7.5" height="7" fill="#d8dcf4"/><path d="M6 3.6H1V11H8.5V7" fill="none" stroke="#3f4fc4" stroke-width="1.5"/><path d="M4.2 8.2L10.8 1.6M7 1.2H11.5V5.7" fill="none" stroke="#3f4fc4" stroke-width="1.6"/></svg>
<div class="t" style="left:640.6px;top:353.31px;font-size:11.6px;line-height:13.34px;color:#484848;">rowid: 71</div>
<div class="a" style="left:544px;top:380.5px;width:69.5px;height:17px;border:1px solid #a9a9a9;border-radius:9px;background:linear-gradient(180deg,#ffffff 0%,#f2f2f2 50%,#dedede 100%)"></div>
<svg class="a" style="left:549px;top:384.5px;" width="10" height="10" viewBox="0 0 10 10"><circle cx="5" cy="5" r="4.3" fill="#7a7a7a"/></svg>
<div class="t" style="left:561px;top:382.83px;font-size:11.8px;line-height:13.57px;color:#333;transform:scaleX(.93);transform-origin:0 0">Cancel</div>
<div class="a" style="left:626px;top:380.5px;width:69.5px;height:17px;border:1px solid #a6a6a6;border-radius:9px;background:linear-gradient(180deg,#fff 0%,#eee 100%)"></div>
<div class="a" style="left:629px;top:378px;width:69px;height:21px;background:#eef200;border-radius:9px 11px 12px 10px;opacity:.97"></div>
<div class="a" style="left:626px;top:380.5px;width:69.5px;height:17px;border:1px solid rgba(120,120,60,.55);border-radius:9px"></div>
<svg class="a" style="left:631px;top:384.5px;" width="10" height="10" viewBox="0 0 10 10"><circle cx="5" cy="5" r="4.3" fill="#3aa020"/></svg>
<div class="t" style="left:642.3px;top:382.46px;font-size:12.2px;line-height:14.03px;color:#2a2a00;">Update</div>
</body></html>
